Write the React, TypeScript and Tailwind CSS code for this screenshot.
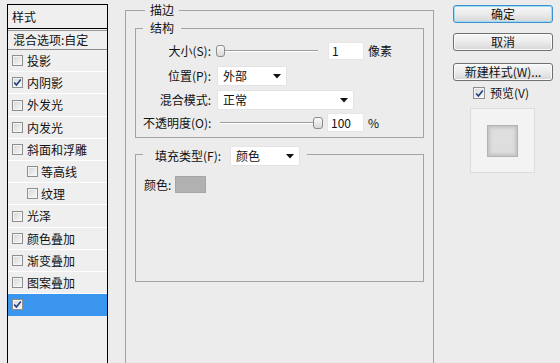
import React from "react";

const Check = () => (
  <svg width="9" height="9" viewBox="0 0 9 9" className="block">
    <path d="M1.2 4.4 L3.4 7 L7.8 1.4" fill="none" stroke="#1d3f86" strokeWidth="1.6" />
  </svg>
);

const Box = ({ checked = false, size = 11 }: { checked?: boolean; size?: number }) => (
  <div
    className="shrink-0 border border-[#8e8f8f] bg-linear-to-br from-[#d6d6d6] to-[#f9f9f9] shadow-[inset_0_0_0_1px_#f4f4f4] flex items-center justify-center"
    style={{ width: size, height: size }}
  >
    {checked ? <Check /> : null}
  </div>
);

const Arrow = () => (
  <svg width="8" height="5" viewBox="0 0 8 5" className="block">
    <path d="M0 0 H8 L4 4.5 Z" fill="#111" />
  </svg>
);

const Select = ({ text, w }: { text: string; w: number }) => (
  <div
    className="h-[20px] bg-white border border-[#e4e4e4] flex items-center justify-between pl-[5px] pr-[5px] shrink-0"
    style={{ width: w }}
  >
    <span className="leading-[14px]">{text}</span>
    <Arrow />
  </div>
);

const Thumb = () => (
  <div className="w-[9px] h-[12px] shrink-0 rounded-[3px] border border-[#8c8c8c] bg-linear-to-b from-[#fafafa] to-[#d9d9d9]" />
);

const Track = () => (
  <div className="flex-1 h-[2px] border-t border-[#9c9c9c] border-b border-b-white" />
);

const rows: { label: string; h: number; sub?: boolean; checked?: boolean; sel?: boolean }[] = [
  { label: "投影", h: 22 },
  { label: "内阴影", h: 22, checked: true },
  { label: "外发光", h: 23 },
  { label: "内发光", h: 22 },
  { label: "斜面和浮雕", h: 22 },
  { label: "等高线", h: 22, sub: true },
  { label: "纹理", h: 22, sub: true },
  { label: "光泽", h: 23 },
  { label: "颜色叠加", h: 22 },
  { label: "渐变叠加", h: 22 },
  { label: "图案叠加", h: 22 },
  { label: "", h: 22, checked: true, sel: true },
];

const Btn = ({ children, def = false, mt }: { children: React.ReactNode; def?: boolean; mt: string }) => (
  <div
    className={
      "h-[18px] w-[100px] rounded-[3px] flex items-center justify-center leading-[14px] bg-linear-to-b from-[#f7f7f7] via-[#ebebeb] to-[#d6d6d6] " +
      mt +
      (def
        ? " border border-[#3d8fcf] shadow-[inset_0_0_0_1px_#9fdcf6]"
        : " border border-[#707070] shadow-[inset_0_0_0_1px_#fbfbfb]")
    }
  >
    {children}
  </div>
);

export default function App() {
  return (
    <div className="w-[560px] h-[363px] overflow-hidden bg-[#ececec] flex items-start text-[12px] text-[#111] font-['Noto_Sans_CJK_SC','Liberation_Sans',sans-serif]">
      {/* Left style list */}
      <div className="ml-[7px] mt-[4px] w-[101px] h-[380px] shrink-0 border border-black bg-[#efefef]">
        <div className="h-[23px] flex items-center pl-[4px] leading-[14px]">样式</div>
        <div className="h-[3px] border-t border-black border-b border-b-[#9a9a9a]" />
        <div className="h-[19px] flex items-center pl-[5px] border-b border-[#8c8c8c] leading-[14px] whitespace-nowrap">
          混合选项:自定
        </div>
        {rows.map((r, i) => (
          <div
            key={i}
            className={
              "flex items-center border-b leading-[14px] " +
              (r.sel ? "bg-[#3a95ee] border-[#3a95ee]" : "border-white") +
              (r.sub ? " pl-[19px] gap-[3px]" : " pl-[4px] gap-[4px]")
            }
            style={{ height: r.h }}
          >
            <Box checked={r.checked} />
            <span>{r.label}</span>
          </div>
        ))}
      </div>

      {/* Main area */}
      <fieldset className="ml-[17px] mt-[3px] w-[309px] h-[400px] shrink-0 border border-[#a3a3a3] px-[9px]">
        <legend className="ml-[10px] px-[5px] leading-[14px]">描边</legend>

        <fieldset className="mt-[4px] w-[289px] border border-[#a3a3a3] pb-[5px]">
          <legend className="ml-[7px] px-[7px] leading-[14px]">结构</legend>

          {/* 大小 */}
          <div className="mt-[7px] h-[18px] flex items-center">
            <div className="w-[75px] text-right leading-[14px] whitespace-nowrap">大小(S):</div>
            <div className="ml-[5px] w-[102px] flex items-center">
              <Thumb />
              <Track />
            </div>
            <div className="ml-[10px] w-[36px] h-[18px] bg-white border border-[#e6e6e6] pl-[3px] flex items-center leading-[14px]">
              1
            </div>
            <span className="ml-[4px] leading-[14px]">像素</span>
          </div>

          {/* 位置 */}
          <div className="mt-[6px] h-[20px] flex items-center">
            <div className="w-[75px] text-right leading-[14px] whitespace-nowrap">位置(P):</div>
            <div className="ml-[6px]">
              <Select text="外部" w={70} />
            </div>
          </div>

          {/* 混合模式 */}
          <div className="mt-[4px] h-[20px] flex items-center">
            <div className="w-[75px] text-right leading-[14px] whitespace-nowrap">混合模式:</div>
            <div className="ml-[6px]">
              <Select text="正常" w={137} />
            </div>
          </div>

          {/* 不透明度 */}
          <div className="mt-[3px] h-[19px] flex items-center">
            <div className="ml-[7px] w-[77px] leading-[14px] whitespace-nowrap">不透明度(O):</div>
            <div className="w-[103px] flex items-center">
              <Track />
              <div className="w-[10px] h-[12px] shrink-0 rounded-[3px] border border-[#8c8c8c] bg-linear-to-b from-[#fafafa] to-[#d9d9d9]" />
            </div>
            <div className="ml-[4px] w-[37px] h-[19px] bg-white border border-[#e6e6e6] pl-[3px] flex items-center leading-[14px]">
              100
            </div>
            <span className="ml-[4px] leading-[14px]">%</span>
          </div>
        </fieldset>

        <fieldset className="mt-[8px] w-[289px] h-[136px] border border-[#a3a3a3]">
          <legend className="ml-[7px] pl-[12px] pr-[7px]">
            <div className="h-[16px] flex items-start">
              <div className="h-[20px] flex items-center">
                <span className="w-[75px] leading-[14px] whitespace-nowrap">填充类型(F):</span>
                <Select text="颜色" w={70} />
              </div>
            </div>
          </legend>
          <div className="mt-[14px] ml-[8px] flex items-center h-[17px]">
            <span className="w-[31px] leading-[14px]">颜色:</span>
            <div className="w-[31px] h-[17px] bg-[#b1b1b1] border border-[#a6a6a6]" />
          </div>
        </fieldset>
      </fieldset>

      {/* Right column */}
      <div className="ml-[19px] w-[100px] shrink-0 flex flex-col">
        <Btn def mt="mt-[5px]">确定</Btn>
        <Btn mt="mt-[10px]">取消</Btn>
        <Btn mt="mt-[12px]">新建样式(W)...</Btn>
        <div className="mt-[6px] ml-[20px] h-[12px] flex items-center gap-[5px]">
          <Box checked size={12} />
          <span className="leading-[14px]">预览(V)</span>
        </div>
        <div className="mt-[9px] ml-[17px] w-[65px] h-[65px] bg-[#f3f3f3] border border-[#dcdcdc] flex items-center justify-center">
          <div className="w-[31px] h-[32px] bg-[#dedede] border border-[#b3b3b3] shadow-[inset_0_0_3px_2px_#c4c4c4]" />
        </div>
      </div>
    </div>
  );
}
